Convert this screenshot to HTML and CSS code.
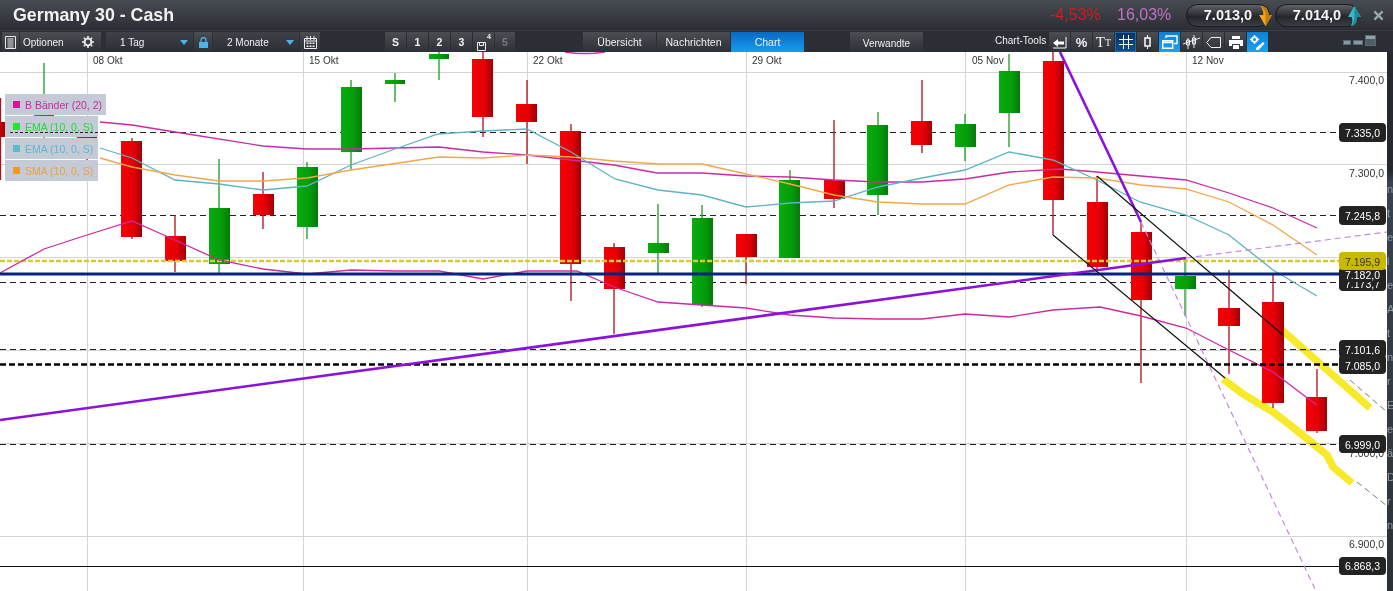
FILE: index.html
```html
<!DOCTYPE html>
<html>
	<head>
		<meta charset="utf-8">
		<title>Germany 30 - Cash</title>
		<link rel="stylesheet" href="styles.css">
	</head>
	<body>
		<div class="titlebar">
			<span class="title">Germany 30 - Cash</span>
			<span class="change">-4,53%</span>
			<span class="margin">16,03%</span>
			<div class="quote quote-sell">7.013,0
				<svg class="quote-arrow" viewBox="0 0 14 22"><path d="M1 0c6 0 9 4 9.500 10H14L7 22 0 10h4.500C5 6 4 3 1 0z" fill="#f2a41e"/><path d="M1 0c6 0 9 4 9.500 10H14L7 22V10C7 6 5 2 1 0z" fill="#c47c10"/></svg>
			</div>
			<div class="quote quote-buy">7.014,0
				<svg class="quote-arrow" viewBox="0 0 14 22"><path d="M7 0l7 12H10c0 5-2 9-7 10 2-3 2-6 1-10H0z" fill="#38b8c8"/><path d="M7 0l7 12H10c0 5-2 9-7 10 3-3 4-6 4-10z" fill="#1c8c9c"/></svg>
			</div>
			<svg class="close" viewBox="0 0 12 12"><path d="M1.500 1.500l9 9M10.500 1.500l-9 9" stroke="#9aa8b0" stroke-width="2.400"/></svg>
		</div>

		<div class="toolbar">
			<div class="btn btn-list">
				<svg width="11" height="13" viewBox="0 0 11 13"><path d="M.5.500h10v12H.5zM2.500 3h6M2.500 5h6M2.500 7h6M2.500 9h6M2.500 11h6" fill="none" stroke="#e8e8e8"/></svg>
			</div>
			<div class="btn btn-options">
				<span>Optionen</span>
				<svg width="12" height="12" viewBox="0 0 12 12"><circle cx="6" cy="6" r="3.400" fill="none" stroke="#e8e8e8" stroke-width="2"/><path d="M6 0v2M6 10v2M0 6h2M10 6h2M1.800 1.800l1.400 1.400M8.800 8.800l1.400 1.400M10.200 1.800L8.800 3.200M3.200 8.800l-1.400 1.400" stroke="#e8e8e8" stroke-width="1.600"/></svg>
			</div>
			<div class="btn btn-select btn-day"><span>1 Tag</span><i class="caret"></i></div>
			<div class="btn btn-lock">
				<svg width="9" height="11" viewBox="0 0 9 11"><path d="M2 5V3a2.500 2.500 0 0 1 5 0v2" fill="none" stroke="#4db4ea" stroke-width="1.300"/><path d="M0 5h9v6H0z" fill="#4db4ea"/></svg>
			</div>
			<div class="btn btn-select btn-range"><span>2 Monate</span><i class="caret"></i></div>
			<div class="btn btn-cal">
				<svg width="13" height="13" viewBox="0 0 13 13"><path d="M.5 2.500h12v10H.5zM3 0v4M6.500 0v4M10 0v4M.5 5h12" fill="none" stroke="#eee"/><path d="M2.500 6.500h2v1.500h-2zM5.500 6.500h2v1.500h-2zM8.500 6.500h2v1.500h-2zM2.500 9.500h2v1.500h-2zM5.500 9.500h2v1.500h-2zM8.500 9.500h2v1.500h-2z" fill="#eee"/></svg>
			</div>

			<div class="layouts">
				<div class="btn btn-layout">S</div>
				<div class="btn btn-layout">1</div>
				<div class="btn btn-layout">2</div>
				<div class="btn btn-layout">3</div>
				<div class="btn btn-layout btn-save">
					<svg width="9" height="9" viewBox="0 0 9 9"><path d="M.5.500h8v8h-8zM2.500.500v3h4v-3" fill="none" stroke="#eee"/></svg>
					<sup>4</sup>
				</div>
				<div class="btn btn-layout btn-off">5</div>
			</div>

			<div class="tabs">
				<div class="btn tab">Übersicht</div>
				<div class="btn tab">Nachrichten</div>
				<div class="btn tab tab-on">Chart</div>
			</div>
			<div class="btn tab tab-related">Verwandte</div>

			<span class="tools-label">Chart-Tools</span>
			<div class="tools">
				<div class="btn tool">
					<svg width="15" height="13" viewBox="0 0 15 13"><path d="M1 7l5-4v2.500h6v3H6V11z" fill="#fff"/><path d="M14 1v11H1" fill="none" stroke="#fff"/></svg>
				</div>
				<div class="btn tool tool-text">%</div>
				<div class="btn tool tool-serif">T<small>T</small></div>
				<div class="btn tool tool-dark">
					<svg width="14" height="14" viewBox="0 0 14 14"><path d="M4.500 0v14M9.500 0v14M0 4.500h14M0 9.500h14" stroke="#fff"/></svg>
				</div>
				<div class="btn tool">
					<svg width="9" height="14" viewBox="0 0 9 14"><path d="M4.500 0v3M4.500 11v3" stroke="#fff"/><path d="M2 3h5v8H2z" fill="none" stroke="#fff" stroke-width="1.500"/></svg>
				</div>
				<div class="btn tool tool-blue">
					<svg width="16" height="14" viewBox="0 0 16 14"><path d="M.7 5.700h10v7.500H.7zM.7 7.500h10" fill="none" stroke="#fff" stroke-width="1.400"/><path d="M4 3V1h11v7.500h-3" fill="none" stroke="#fff" stroke-width="1.400"/></svg>
				</div>
				<div class="btn tool">
					<svg width="17" height="14" viewBox="0 0 17 14"><path d="M0 9l17-6M5 3v11M11 0v13" stroke="#eee"/><path d="M3.500 5h3v5h-3zM9.500 3h3v6h-3z" fill="none" stroke="#eee"/></svg>
				</div>
				<div class="btn tool">
					<svg width="15" height="11" viewBox="0 0 15 11"><path d="M14.500.500H5L.7 5.500 5 10.500h9.500z" fill="none" stroke="#eee"/></svg>
				</div>
				<div class="btn tool">
					<svg width="14" height="13" viewBox="0 0 14 13"><path d="M3 0h8v3H3zM0 4h14v6h-3V8H3v2H0zM4 9h6v4H4z" fill="#fff"/></svg>
				</div>
				<div class="btn tool tool-blue">
					<svg width="15" height="15" viewBox="0 0 15 15"><circle cx="4.500" cy="4.500" r="2.400" fill="none" stroke="#fff" stroke-width="1.800"/><path d="M4.500 0v2M4.500 7v2M0 4.500h2M7 4.500h2" stroke="#fff" stroke-width="1.400"/><path d="M6 13l7-6 1.500 1.500-6 6.500H6z" fill="#fff"/></svg>
				</div>
			</div>
			<div class="winbtns">
				<i class="win"></i>
				<i class="win win-mid"></i>
				<i class="win win-max"></i>
			</div>
		</div>

		<div class="main">
			<div class="chart">
				<svg class="plot" width="1387" height="539" viewBox="0 52 1387 539">
					<defs>
						<linearGradient id="redfill"><stop offset="0" stop-color="#f60004"/><stop offset=".6" stop-color="#e20006"/><stop offset="1" stop-color="#a00008"/></linearGradient>
						<linearGradient id="greenfill"><stop offset="0" stop-color="#06ad0c"/><stop offset=".6" stop-color="#049c0a"/><stop offset="1" stop-color="#047a08"/></linearGradient>
					</defs>

					<!-- grid -->
					<path class="grid" d="M87.500 52v539M303.500 52v539M527.500 52v539M746.500 52v539M965.500 52v539M1186.500 52v539M0 72.500h1387M0 164.500h1387M0 257.500h1387M0 350.500h1387M0 443.500h1387M0 536.500h1387"/>

					<!-- levels -->
					<path class="level" d="M0 132.500h1339M0 215.500h1339M0 282.500h1339M0 349.500h1339M0 444.500h1339"/>

					<!-- falling candles -->
					<g class="wick-down">
						<path d="M.5 98v82M87 116v49M132 138v101M175 215v57M263 172v57M483 52v85M527 80v84M571 124v177M614 243v91M746 234v50M834 120v88M922 80v73M1053 52v183M1097 176v94M1141 222v161M1229 270v104M1273 275v133M1317 369v64"/>
					</g>
					<g class="body-down">
						<rect x="-16" y="122" width="21" height="15"/>
						<rect x="77" y="130" width="20" height="8"/>
						<rect x="121" y="141" width="21" height="96"/>
						<rect x="165" y="236" width="21" height="25"/>
						<rect x="253" y="194" width="21" height="21"/>
						<rect x="472" y="59" width="21" height="58"/>
						<rect x="516" y="104" width="21" height="18"/>
						<rect x="560" y="131" width="21" height="133"/>
						<rect x="604" y="247" width="21" height="42"/>
						<rect x="736" y="234" width="21" height="23"/>
						<rect x="824" y="180" width="21" height="19"/>
						<rect x="911" y="121" width="21" height="24"/>
						<rect x="1043" y="61" width="21" height="139"/>
						<rect x="1087" y="202" width="21" height="65"/>
						<rect x="1131" y="232" width="21" height="68"/>
						<rect x="1218" y="308" width="22" height="18"/>
						<rect x="1262" y="302" width="22" height="101"/>
						<rect x="1306" y="397" width="21" height="34"/>
					</g>

					<!-- rising candles -->
					<g class="wick-up">
						<path d="M44 63v75M219 159v114M307 162v77M351 80v90M395 73v29M439 52v28M658 204v70M702 205v102M790 170v88M878 112v103M965 114v47M1009 54v93M1185 258v58"/>
					</g>
					<g class="body-up">
						<rect x="34" y="114" width="20" height="2"/>
						<rect x="209" y="208" width="21" height="56"/>
						<rect x="297" y="167" width="21" height="60"/>
						<rect x="341" y="87" width="21" height="65"/>
						<rect x="385" y="80" width="20" height="4"/>
						<rect x="429" y="54" width="20" height="5"/>
						<rect x="648" y="243" width="21" height="10"/>
						<rect x="692" y="218" width="21" height="87"/>
						<rect x="779" y="180" width="21" height="78"/>
						<rect x="867" y="125" width="21" height="70"/>
						<rect x="955" y="124" width="21" height="23"/>
						<rect x="999" y="71" width="21" height="42"/>
						<rect x="1175" y="276" width="21" height="13"/>
					</g>

					<path class="level-yellow" d="M0 261h1339"/>

					<!-- indicators -->
					<polyline class="band" points="100,122 132,125 175,132 263,146 307,149 351,149 395,148 439,147 483,152 527,155 571,160 614,165 657,173 702,173 746,176 790,177 834,180 878,182 922,182 965,179 1010,172 1060,169 1097,172 1141,176 1186,180 1229,193 1273,208 1317,228"/>
					<polyline class="band" points="0,273 44,249 87,235 132,221 175,240 219,260 263,269 307,274 351,270 395,271 439,271 483,279 527,271 577,271 614,287 658,302 702,305 746,308 790,315 834,318 878,319 922,319 965,314 1009,317 1053,310 1100,307 1141,316 1186,328 1229,350 1273,372 1306,397 1317,405"/>
					<polyline class="ema" points="100,148 132,158 175,180 219,184 263,190 307,186 351,165 395,149 438,134 483,131 527,129 571,152 615,179 658,190 702,195 746,207 790,203 834,201 878,187 922,178 965,170 1009,152 1053,160 1097,180 1140,202 1186,215 1229,235 1273,270 1317,296"/>
					<polyline class="sma" points="100,158 132,167 175,175 219,181 263,181 307,178 351,170 439,157 483,158 527,155 571,157 614,161 658,164 702,164 746,174 790,184 834,195 878,202 922,204 965,204 1009,185 1053,177 1097,178 1141,185 1186,189 1229,202 1273,225 1317,255"/>
					<path class="band" d="M565 52q20 3 40 0"/>

					<!-- hand drawn lines -->
					<path class="level-heavy" d="M0 364.500h1339"/>
					<path class="level-solid" d="M0 566.500h1339"/>
					<path class="level-blue" d="M0 274h1339"/>
					<path class="trend-soft" d="M1186 258L1387 232M1141 222L1316 591"/>
					<path class="trend" d="M0 420L1186 258M1060 52L1141 222"/>
					<path class="channel" d="M1097 176L1283 335M1053 235L1225 378"/>
					<path class="channel-fade" d="M1350 380L1387 412M1357 482L1387 506"/>
					<path class="marker" d="M1282 330L1370 408"/>
					<path class="marker" d="M1223 379L1243 394L1273 412L1290 425L1327 455L1333 467L1352 483"/>

					<!-- dates -->
					<g class="axis-date">
						<text x="93" y="64">08 Okt</text>
						<text x="309" y="64">15 Okt</text>
						<text x="533" y="64">22 Okt</text>
						<text x="752" y="64">29 Okt</text>
						<text x="972" y="64">05 Nov</text>
						<text x="1192" y="64">12 Nov</text>
					</g>

					<!-- prices -->
					<g class="axis-price">
						<text x="1384" y="84">7.400,0</text>
						<text x="1384" y="177">7.300,0</text>
						<text x="1384" y="548">6.900,0</text>
						<text x="1384" y="457">7.000,0</text>
					</g>
					<g class="tag">
						<rect x="1339" y="123" width="47" height="19" rx="4"/><text x="1362.500" y="136.500">7.335,0</text>
						<rect x="1339" y="206" width="47" height="19" rx="4"/><text x="1362.500" y="220">7.245,8</text>
						<rect x="1339" y="272" width="47" height="19" rx="4"/><text x="1362.500" y="288">7.173,7</text>
						<rect x="1339" y="340" width="47" height="18" rx="4"/><text x="1362.500" y="354">7.101,6</text>
						<rect x="1339" y="355" width="47" height="19" rx="4"/><text x="1362.500" y="369.500">7.085,0</text>
						<rect x="1339" y="435" width="47" height="18" rx="4"/><text x="1362.500" y="449">6.999,0</text>
						<rect x="1339" y="557" width="47" height="18" rx="4"/><text x="1362.500" y="570">6.868,3</text>
						<rect x="1339" y="268" width="47" height="14" rx="3"/><text x="1362.500" y="279">7.182,0</text>
					</g>
					<g class="tag tag-yellow">
						<rect x="1339" y="252" width="47" height="18" rx="4"/><text x="1362.500" y="266">7.195,9</text>
					</g>
				</svg>

				<div class="legend">
					<div class="legend-row legend-wide legend-band"><i></i>B Bänder (20, 2)</div>
					<div class="legend-row legend-green"><i></i>EMA (10, 0, S)<b class="legend-dash"></b></div>
					<div class="legend-row legend-cyan"><i></i>EMA (10, 0, S)</div>
					<div class="legend-row legend-orange"><i></i>SMA (10, 0, S)</div>
				</div>
			</div>

			<div class="behind">
				<span>n</span>
				<span>t</span>
				<span>e</span>
				<span>l</span>
				<span>e</span>
				<span>A</span>
				<span>t</span>
				<span>n</span>
				<span>r</span>
				<span>E</span>
				<span>e</span>
				<span>ä</span>
				<span>D</span>
				<span>r</span>
				<span>n</span>
			</div>
		</div>
	</body>
</html>
```

FILE: styles.css
```css
html {
  box-sizing: border-box;
  font-family: 'Liberation Sans', sans-serif;
}

*, *:before, *:after {
  box-sizing: inherit;
}

body {
  margin: 0;
  padding: 0;
  background: #2a2d33;
  overflow: hidden;
}

/* title bar */
.titlebar {
  height: 30px;
  display: flex;
  align-items: center;
  background: linear-gradient(#474c52, #2b2e34);
  color: #fff;
}
.title {
  margin-left: 13px;
  width: 1037px;
  font-size: 17.800px;
  font-weight: bold;
  color: #f2f2f2;
}
.change {
  width: 67px;
  font-size: 16px;
  color: #d01a22;
}
.margin {
  width: 69px;
  font-size: 16px;
  color: #c272c4;
}
.quote {
  position: relative;
  width: 84px;
  height: 23px;
  margin-right: 5px;
  border-radius: 12px;
  background: linear-gradient(#62676b, #24262b 55%, #3c4045);
  box-shadow: inset 0 0 0 1px #1c1e22;
  font-size: 14.500px;
  font-weight: bold;
  line-height: 23px;
  text-align: center;
  color: #f4f4f4;
}
.quote-arrow {
  position: absolute;
  right: -2px;
  top: 1px;
  width: 13px;
  height: 22px;
}
.close {
  width: 11px;
  height: 11px;
  margin-left: 9px;
}

/* toolbar */
.toolbar {
  height: 22px;
  display: flex;
  align-items: stretch;
  padding-top: 1px;
  background: #2b2e35;
  border-top: 1px solid #3a3e44;
  font-size: 10px;
  color: #f0f0f0;
}
.btn {
  display: flex;
  align-items: center;
  justify-content: center;
  background: linear-gradient(#4a4d52, #2d3036);
}
.btn-list {
  width: 17px;
  margin-left: 2px;
}
.btn-options {
  width: 81px;
  margin-left: 1px;
  padding: 0 7px 0 3px;
  justify-content: space-between;
}
.btn-select {
  padding: 0 5px 0 14px;
  justify-content: space-between;
  background: linear-gradient(#3e4147, #2b2e35);
  font-size: 10px;
}
.btn-day {
  width: 87px;
  margin-left: 5px;
}
.btn-lock {
  width: 18px;
  margin-left: 1px;
}
.btn-range {
  width: 86px;
  margin-left: 1px;
}
.btn-cal {
  width: 20px;
  margin-left: 1px;
}
.caret {
  width: 0;
  height: 0;
  border-left: 4.500px solid transparent;
  border-right: 4.500px solid transparent;
  border-top: 5px solid #4db4ea;
}
.layouts {
  display: flex;
  gap: 1px;
  margin-left: 65px;
}
.btn-layout {
  width: 21px;
  font-size: 10.500px;
  font-weight: bold;
}
.btn-save {
  position: relative;
}
.btn-save svg {
  margin-top: 8px;
  margin-right: 5px;
}
.btn-save sup {
  position: absolute;
  right: 3px;
  top: 1px;
  font-size: 7px;
  line-height: 8px;
}
.btn-off {
  width: 20px;
  color: #777b80;
}
.tabs {
  display: flex;
  gap: 1px;
  margin-left: 68px;
}
.tab {
  width: 73px;
  font-size: 10.500px;
}
.tab-on {
  background: linear-gradient(#0a68c2, #159ef0);
}
.tab-related {
  margin-left: 46px;
  padding-top: 2px;
  font-size: 10px;
}
.tools-label {
  width: 54px;
  margin-left: 72px;
  padding-top: 3px;
  font-size: 10px;
  white-space: nowrap;
}
.tools {
  display: flex;
  gap: 1px;
}
.tool {
  width: 21px;
}
.tool-text {
  font-size: 13px;
  font-weight: bold;
}
.tool-serif {
  font-family: 'Liberation Serif', serif;
  font-size: 15px;
}
.tool-serif small {
  font-size: 10px;
}
.tool-dark {
  background: linear-gradient(#0a2f5c, #0d4f92);
  box-shadow: inset 0 0 0 1px #1d6bb0;
}
.tool-blue {
  background: linear-gradient(#0f7fd6, #18a4f4);
}
.winbtns {
  display: flex;
  align-items: center;
  gap: 2px;
  margin-left: 75px;
}
.win {
  width: 8px;
  height: 5px;
  background: #8a9aa4;
  box-shadow: inset 0 0 0 1px #5a6870;
}
.win-mid {
  width: 10px;
  height: 5px;
}
.win-max {
  width: 11px;
  height: 11px;
  margin-top: -4px;
  background: linear-gradient(#8fa3ad 40%, #4e5c64 40%);
}

/* chart */
.main {
  display: flex;
  height: 539px;
}
.chart {
  position: relative;
  width: 1387px;
  height: 539px;
  background: #fff;
  overflow: hidden;
}
.plot {
  display: block;
}
.plot text {
  font-family: 'Liberation Sans', sans-serif;
}
.grid {
  fill: none;
  stroke: #d4d4d4;
  stroke-width: 1;
}
.level {
  fill: none;
  stroke: #222;
  stroke-width: 1;
  stroke-dasharray: 6 4;
}
.level-yellow {
  fill: none;
  stroke: #d8cb30;
  stroke-width: 2.400;
  stroke-dasharray: 5 2;
}
.level-heavy {
  fill: none;
  stroke: #000;
  stroke-width: 2.500;
  stroke-dasharray: 6 3;
}
.level-solid {
  fill: none;
  stroke: #111;
  stroke-width: 1;
}
.level-blue {
  fill: none;
  stroke: #06237e;
  stroke-width: 2.800;
}
.wick-down path {
  fill: none;
  stroke: #b0101c;
  stroke-width: 1.300;
}
.wick-up path {
  fill: none;
  stroke: #1f9a22;
  stroke-width: 1.300;
}
.body-down rect {
  fill: url(#redfill);
}
.body-up rect {
  fill: url(#greenfill);
}
.band {
  fill: none;
  stroke: #cc2aa4;
  stroke-width: 1.300;
}
.ema {
  fill: none;
  stroke: #5cb4c4;
  stroke-width: 1.300;
}
.sma {
  fill: none;
  stroke: #f0a84c;
  stroke-width: 1.300;
}
.trend {
  fill: none;
  stroke: #8a12da;
  stroke-width: 2.600;
}
.trend-soft {
  fill: none;
  stroke: #c48ae0;
  stroke-width: 1.200;
  stroke-dasharray: 6 4;
}
.channel {
  fill: none;
  stroke: #111;
  stroke-width: 1.200;
}
.channel-fade {
  fill: none;
  stroke: #777;
  stroke-width: 1;
  stroke-dasharray: 6 4;
}
.marker {
  fill: none;
  stroke: #f8ea2a;
  stroke-width: 7.500;
  stroke-linejoin: round;
  mix-blend-mode: multiply;
}
.axis-date text {
  font-size: 10px;
  fill: #333;
}
.axis-price text {
  font-size: 10.500px;
  fill: #333;
  text-anchor: end;
}
.tag rect {
  fill: #232323;
}
.tag text {
  font-size: 10.500px;
  fill: #fff;
  text-anchor: middle;
}
.tag-yellow rect {
  fill: #c9b800;
}
.tag-yellow text {
  fill: #333;
}

/* indicator legend sits over the plot */
.legend {
  position: absolute;
  left: 5px;
  top: 42px;
  display: flex;
  flex-direction: column;
  gap: 1px;
}
.legend-row {
  position: relative;
  display: flex;
  align-items: center;
  width: 93px;
  height: 21px;
  padding-left: 8px;
  background: #c4cad6;
  font-size: 10.500px;
  white-space: nowrap;
}
.legend-wide {
  width: 101px;
}
.legend-row i {
  width: 7px;
  height: 7px;
  margin-right: 5px;
}
.legend-band {
  color: #c92aa0;
}
.legend-band i {
  background: #e0109a;
}
.legend-green {
  color: #22dc33;
}
.legend-green i {
  background: #14f01e;
}
.legend-cyan {
  color: #63b4cc;
}
.legend-cyan i {
  background: #5cbccc;
}
.legend-orange {
  color: #eea040;
}
.legend-orange i {
  background: #f8981c;
}
.legend-dash {
  position: absolute;
  left: 5px;
  right: 0;
  top: 16px;
  border-top: 1px dashed #222;
}

/* window behind the chart, only a sliver shows */
.behind {
  flex: 1;
  display: flex;
  flex-direction: column;
  gap: 10px;
  padding-top: 130px;
  background: linear-gradient(#25282e 22%, #38434d 24%, #2c3138);
  font-size: 11px;
  line-height: 14px;
  color: #8e9ca6;
  overflow: hidden;
}
```
